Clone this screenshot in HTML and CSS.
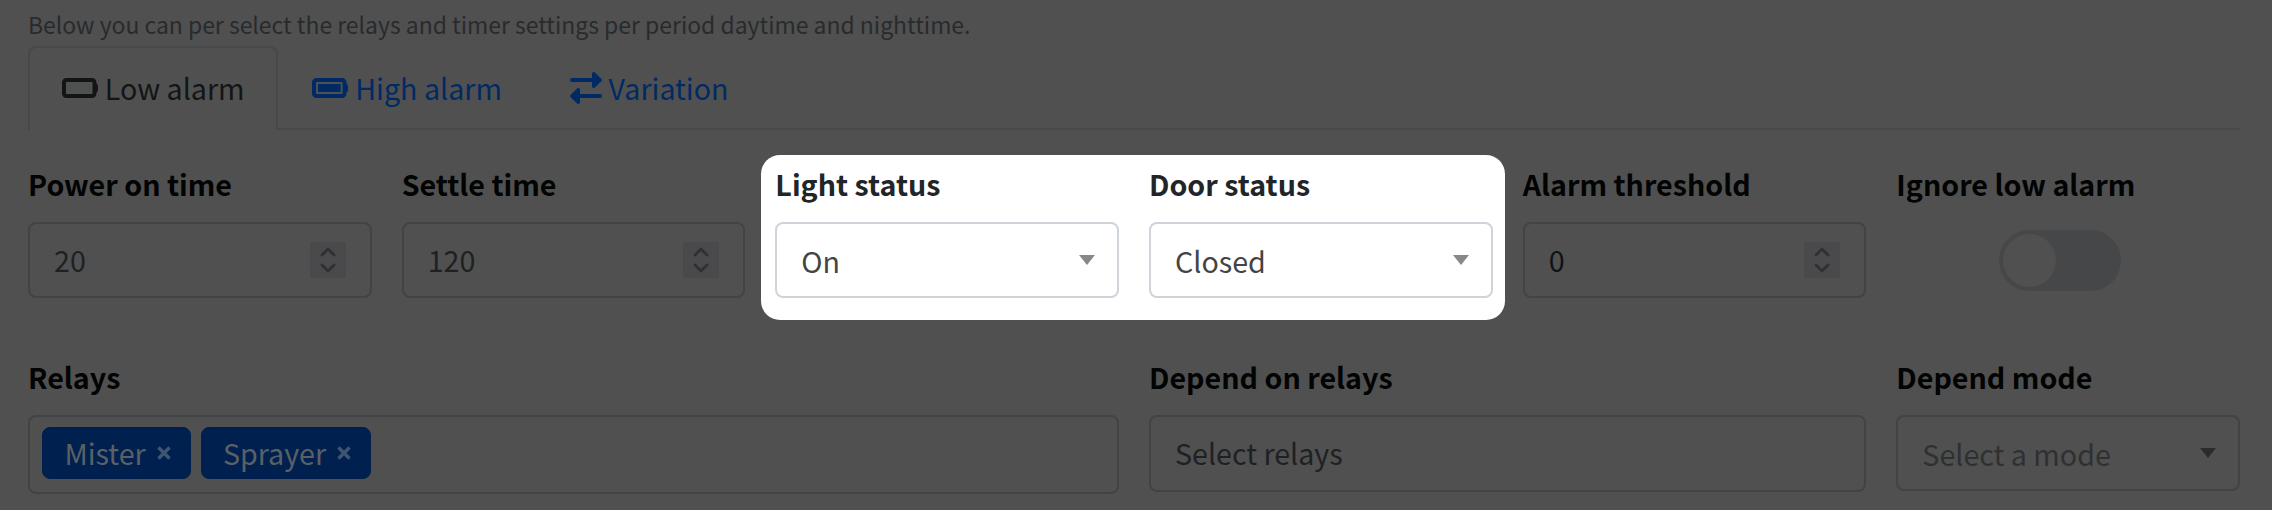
FILE: index.html
```html
<!DOCTYPE html>
<html lang="en">
<head>
<meta charset="utf-8">
<title>Relay settings</title>
<link rel="stylesheet" href="styles.css">
</head>
<body>
<svg class="defs" width="0" height="0" aria-hidden="true">
  <symbol id="spin" viewBox="0 0 36 36"><path d="M12 13 L18 7 L24 13 M12 23 L18 29 L24 23" fill="none" stroke="currentColor" stroke-width="2.8" stroke-linecap="round" stroke-linejoin="round"/></symbol>
  <symbol id="cross" viewBox="0 0 14 14"><path d="M1.5 1.5 L12.5 12.5 M12.5 1.5 L1.5 12.5" fill="none" stroke="currentColor" stroke-width="3.4"/></symbol>
  <symbol id="caret" viewBox="0 0 16 10"><path d="M0 0H16L8 10Z" fill="currentColor"/></symbol>
</svg>
<main class="page">
  <p class="hint">Below you can per select the relays and timer settings per period daytime and nighttime.</p>
  <nav class="tabs">
    <a class="tab active">
      <svg class="battery" viewBox="0 0 36 20"><rect x="2" y="2" width="30.5" height="16" rx="2.5" fill="none" stroke="currentColor" stroke-width="4"/><path d="M34 5.5q2 .5 2 2.5v4q0 2-2 2.5z" fill="currentColor"/></svg>
      <span>Low alarm</span>
    </a>
    <a class="tab">
      <svg class="battery" viewBox="0 0 36 20"><rect x="2" y="2" width="30.5" height="16" rx="2.5" fill="none" stroke="currentColor" stroke-width="4"/><path d="M34 5.5q2 .5 2 2.5v4q0 2-2 2.5zM6 6H28.7V14H6z" fill="currentColor"/></svg>
      <span>High alarm</span>
    </a>
    <a class="tab">
      <svg class="arrows" viewBox="0 0 32 32"><path d="M2 8H24M30 24H8" fill="none" stroke="currentColor" stroke-width="4" stroke-linecap="round"/><path d="M22 2Q22-.6 25 .4L31.5 7Q32.4 8 31.5 9L25 15.6Q22 16.600 22 14ZM10 18Q10 15.400 7 16.400L.5 23Q-.4 24 .5 25L7 31.600Q10 32.600 10 30Z" fill="currentColor"/></svg>
      <span>Variation</span>
    </a>
  </nav>
  <section class="row">
    <div class="field"><label>Power on time</label><div class="box"><span>20</span><svg class="spin"><use href="#spin"/></svg></div></div>
    <div class="field"><label>Settle time</label><div class="box"><span>120</span><svg class="spin"><use href="#spin"/></svg></div></div>
    <div class="spotlight">
      <div class="field"><label>Light status</label><div class="box select"><span>On</span><svg class="caret"><use href="#caret"/></svg></div></div>
      <div class="field"><label>Door status</label><div class="box select"><span>Closed</span><svg class="caret"><use href="#caret"/></svg></div></div>
    </div>
    <div class="field"><label>Alarm threshold</label><div class="box strong"><span>0</span><svg class="spin"><use href="#spin"/></svg></div></div>
    <div class="field"><label>Ignore low alarm</label><div class="switch"><i class="knob"></i></div></div>
  </section>
  <section class="row second">
    <div class="field span3"><label>Relays</label>
      <div class="box tags">
        <span class="tag">Mister<svg class="cross"><use href="#cross"/></svg></span>
        <span class="tag">Sprayer<svg class="cross"><use href="#cross"/></svg></span>
      </div>
    </div>
    <div class="field span2"><label>Depend on relays</label><div class="box multi"><span>Select relays</span></div></div>
    <div class="field"><label>Depend mode</label><div class="box select muted"><span>Select a mode</span><svg class="caret"><use href="#caret"/></svg></div></div>
  </section>
</main>
</body>
</html>
```
FILE: styles.css
```css
* { box-sizing: border-box; }
body {
  margin: 0;
  height: 510px;
  overflow: hidden;
  background: #505050;
  color: #16191a;
  font-family: "Noto Sans CJK SC", "Noto Sans", sans-serif;
  font-size: 28.65px;
  line-height: 48px;
}
.defs { position: absolute; }
.page { padding: 5px 32px 0 28px; }
.hint { margin: 0; height: 41px; font-size: 22.95px; line-height: 38px; color: #282b2d; }
.tabs { display: flex; height: 84px; border-bottom: 2px solid #464849; }
.tab {
  display: flex;
  align-items: center;
  gap: 7px;
  height: 84px;
  padding: 0 31.8px 2px;
  border: 2px solid transparent;
  border-bottom: 0;
  border-radius: 8px 8px 0 0;
  color: #002a63;
}
.tab.active { background: #505050; border-color: #464849; color: #121516; }
.battery { width: 36px; height: 20px; }
.arrows { width: 32px; height: 32px; }
.row {
  display: grid;
  grid-template-columns: repeat(6, minmax(0, 1fr));
  column-gap: 30px;
  margin-top: 28px;
  height: 193px;
}
.second { margin-top: 0; height: 159px; }
.span3 { grid-column: span 3; }
.span2 { grid-column: span 2; }
label { display: block; height: 64px; padding-top: 2px; font-weight: 700; color: #020303; }
.box {
  display: flex;
  align-items: center;
  justify-content: space-between;
  height: 76px;
  padding: 0 24px;
  border: 2px solid #414344;
  border-radius: 8px;
  color: #1e2123;
}
.strong { color: #101314; }
.spin { width: 36px; height: 36px; background: #4a4a4c; color: #303032; }
.select { padding-right: 22px; }
.select span { padding-top: 2px; }
.caret { width: 16px; height: 10px; }
.spotlight {
  grid-column: span 2;
  display: grid;
  grid-template-columns: 1fr 1fr;
  column-gap: 30px;
  height: 165px;
  margin: -3px -12px 0 -14px;
  padding: 3px 12px 0 14px;
  border-radius: 19px;
  background: #fff;
}
.spotlight label { color: #212529; }
.spotlight .box { border-color: #ced4da; color: #444; }
.spotlight .caret { color: #888; }
.switch { width: 122px; height: 61px; margin: 8px 0 0 102.5px; padding: 4px; border-radius: 31px; background: #464748; }
.knob { display: block; width: 53px; height: 53px; border-radius: 50%; background: #505050; }
.tags { justify-content: flex-start; align-items: flex-start; gap: 10px; height: 79px; padding: 10px 12px; }
.tag {
  display: flex;
  align-items: center;
  gap: 11.3px;
  height: 52px;
  padding: 0 18.6px 0 21.4px;
  border: 1px solid #001f4c;
  border-radius: 8px;
  background: #002150;
  color: #5b6064;
}
.cross { width: 14px; height: 14px; color: #405573; }
.multi { height: 77px; padding-bottom: 2px; }
.muted { color: #2e3032; }
.muted .caret { color: #2b2b2b; }
```
